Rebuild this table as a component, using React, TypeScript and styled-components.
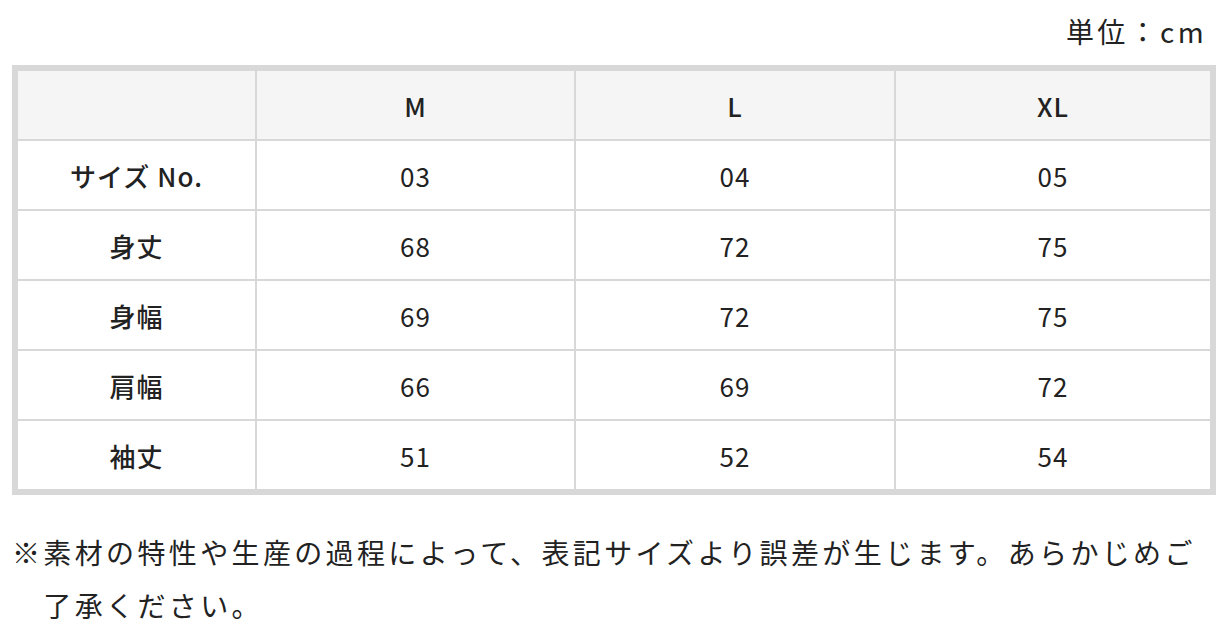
import React from 'react';
import styled, { createGlobalStyle } from 'styled-components';

const GlobalStyle = createGlobalStyle`
  html, body {
    margin: 0;
    padding: 0;
    background: #ffffff;
  }
  body {
    font-family: "Noto Sans CJK JP", "Noto Sans", sans-serif;
    color: #222222;
  }
`;

const Page = styled.div`
  width: 1204px;
  padding: 8px 0 0 12px;
`;

const Unit = styled.p`
  margin: 0 0 11px;
  font-size: 28px;
  line-height: 46px;
  letter-spacing: 0.12em;
  text-align: right;
  padding-right: 9px;
`;

const SizeTable = styled.table`
  width: 1204px;
  table-layout: fixed;
  border-collapse: separate;
  border-spacing: 0;
  border: 6px solid #d8d8d8;
`;

const Cell = styled.td<{ $head?: boolean; $label?: boolean }>`
  height: 68px;
  padding: 0;
  text-align: center;
  vertical-align: middle;
  font-size: 26px;
  letter-spacing: 0.04em;
  font-weight: ${(p) => (p.$head || p.$label ? 500 : 400)};
  background: ${(p) => (p.$head ? '#f5f5f5' : '#ffffff')};
  border-right: 2px solid #d8d8d8;
  border-bottom: 2px solid #d8d8d8;

  &:last-child {
    border-right: 0;
  }

  tr:last-child > & {
    border-bottom: 0;
  }
`;

const Note = styled.p`
  margin: 31px 0 0;
  padding-left: 1.12em;
  text-indent: -1.12em;
  font-size: 28px;
  line-height: 53px;
  letter-spacing: 0.12em;
`;

const sizes = ['M', 'L', 'XL'];

const rows: { label: string; values: string[] }[] = [
  { label: 'サイズ No.', values: ['03', '04', '05'] },
  { label: '身丈', values: ['68', '72', '75'] },
  { label: '身幅', values: ['69', '72', '75'] },
  { label: '肩幅', values: ['66', '69', '72'] },
  { label: '袖丈', values: ['51', '52', '54'] },
];

export default function App() {
  return (
    <>
      <GlobalStyle />
      <Page>
        <Unit>単位：cm</Unit>
        <SizeTable>
          <colgroup>
            <col style={{ width: 239 }} />
            <col style={{ width: 319 }} />
            <col style={{ width: 320 }} />
            <col />
          </colgroup>
          <tbody>
            <tr>
              <Cell $head />
              {sizes.map((s) => (
                <Cell key={s} $head>
                  {s}
                </Cell>
              ))}
            </tr>
            {rows.map((row) => (
              <tr key={row.label}>
                <Cell $label>{row.label}</Cell>
                {row.values.map((v, i) => (
                  <Cell key={i}>{v}</Cell>
                ))}
              </tr>
            ))}
          </tbody>
        </SizeTable>
        <Note>
          ※素材の特性や生産の過程によって、表記サイズより誤差が生じます。あらかじめご了承ください。
        </Note>
      </Page>
    </>
  );
}
